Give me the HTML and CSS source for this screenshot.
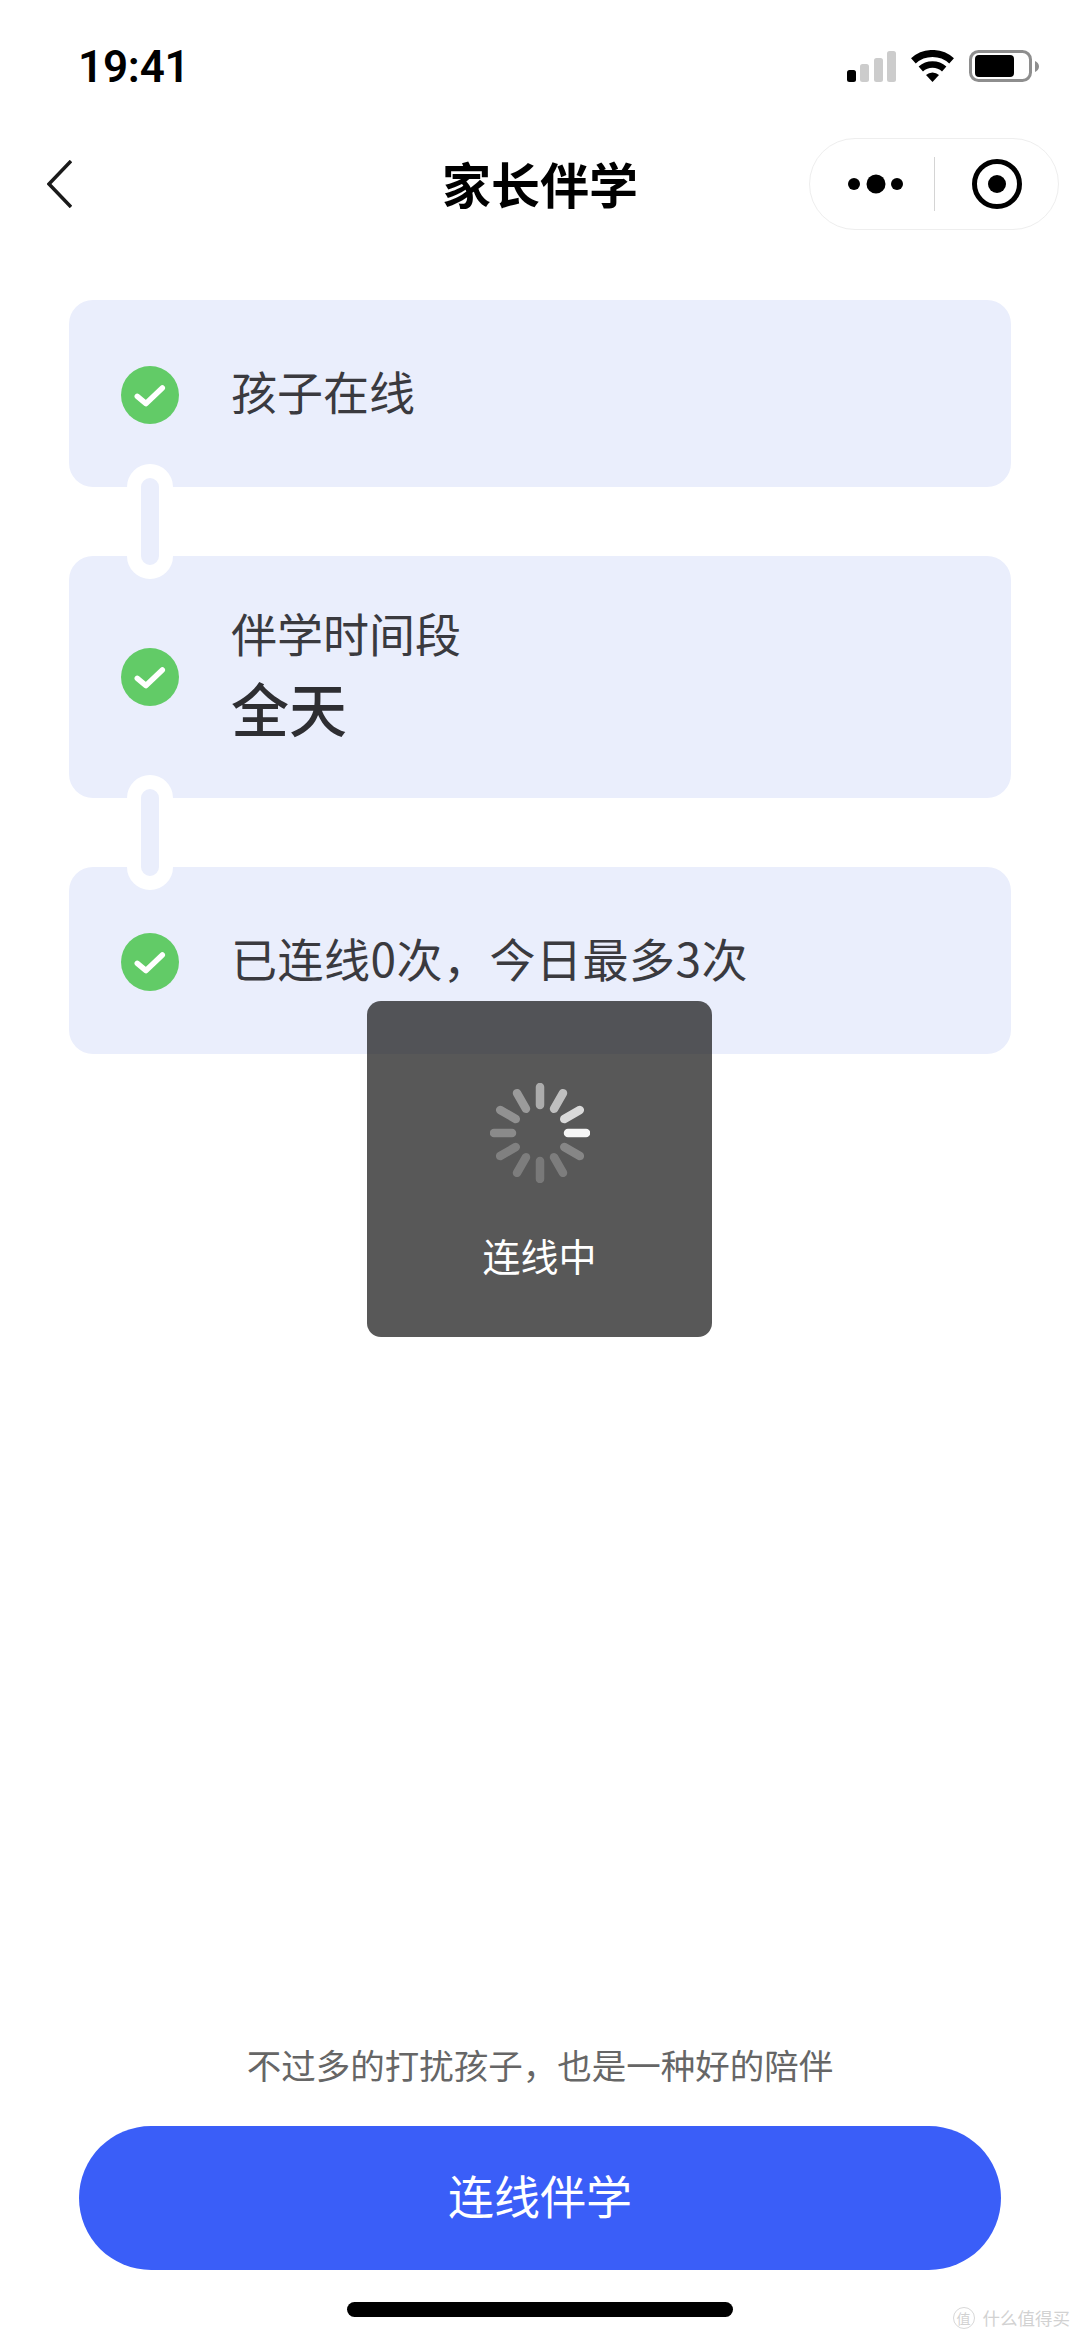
FILE: index.html
```html
<!DOCTYPE html>
<html lang="zh-CN">
<head>
    <meta charset="UTF-8">
    <meta name="viewport" content="width=device-width, initial-scale=1.0">
    <title>家长伴学</title>
    <link rel="stylesheet" href="styles.css">
</head>
<body>
    <div class="phone">
        <div class="status-bar">
            <span class="time">19:41</span>
            <div class="status-icons">
                <svg width="49" height="32" viewBox="0 0 49 32">
                    <rect x="0" y="20" width="9" height="12" rx="2.5" fill="#000"/>
                    <rect x="13" y="14" width="9" height="18" rx="2.5" fill="#ccc"/>
                    <rect x="27" y="8" width="9" height="24" rx="2.5" fill="#ccc"/>
                    <rect x="40" y="1" width="9" height="31" rx="2.5" fill="#ccc"/>
                </svg>
                <svg width="43" height="32" viewBox="0 0 43 32">
                    <path d="M2.4 10.8A28.5 28.5 0 0 1 40.6 10.8" fill="none" stroke="#000" stroke-width="7"/>
                    <path d="M9.8 19A17.5 17.5 0 0 1 33.2 19" fill="none" stroke="#000" stroke-width="6.5"/>
                    <path d="M21.5 32L15 25A9.5 9.5 0 0 1 28 25Z" fill="#000"/>
                </svg>
                <svg width="70" height="32" viewBox="0 0 70 32">
                    <rect x="1.5" y="1.5" width="60" height="29" rx="8" fill="none" stroke="#8e8e8e" stroke-width="3"/>
                    <rect x="6" y="5" width="39" height="22" rx="4" fill="#000"/>
                    <path d="M66 11C68.500 12 70 14 70 16.500C70 19 68.500 21 66 22Z" fill="#8e8e8e"/>
                </svg>
            </div>
        </div>

        <div class="nav-bar">
            <svg class="back" width="25" height="48" viewBox="0 0 25 48">
                <path d="M24 1L2 24L24 47" fill="none" stroke="#1a1a1a" stroke-width="3.500"/>
            </svg>
            <h1 class="nav-title">家长伴学</h1>
            <div class="capsule">
                <div class="capsule-part">
                    <svg class="capsule-dots" width="55" height="20" viewBox="0 0 55 20">
                        <circle cx="6" cy="10" r="6"/>
                        <circle cx="28" cy="10" r="9.500"/>
                        <circle cx="49" cy="10" r="6"/>
                    </svg>
                </div>
                <div class="capsule-part">
                    <svg class="capsule-ring" width="50" height="50" viewBox="0 0 50 50">
                        <circle cx="25" cy="25" r="22.500" fill="none" stroke="#000" stroke-width="5"/>
                        <circle cx="25" cy="25" r="9"/>
                    </svg>
                </div>
            </div>
        </div>

        <div class="steps">
            <div class="card">
                <svg class="check" width="58" height="58" viewBox="0 0 58 58">
                    <circle cx="29" cy="29" r="29" fill="#62cb67"/>
                    <path d="M16.300 30.300L25 37.600L41.300 22" fill="none" stroke="#fff" stroke-width="5.500" stroke-linecap="round" stroke-linejoin="round"/>
                </svg>
                <div class="card-text">孩子在线</div>
                <span class="link"></span>
            </div>
            <div class="card card-tall">
                <svg class="check" width="58" height="58" viewBox="0 0 58 58">
                    <circle cx="29" cy="29" r="29" fill="#62cb67"/>
                    <path d="M16.300 30.300L25 37.600L41.300 22" fill="none" stroke="#fff" stroke-width="5.500" stroke-linecap="round" stroke-linejoin="round"/>
                </svg>
                <div class="card-text">
                    伴学时间段
                    <div class="card-value">全天</div>
                </div>
                <span class="link"></span>
            </div>
            <div class="card">
                <svg class="check" width="58" height="58" viewBox="0 0 58 58">
                    <circle cx="29" cy="29" r="29" fill="#62cb67"/>
                    <path d="M16.300 30.300L25 37.600L41.300 22" fill="none" stroke="#fff" stroke-width="5.500" stroke-linecap="round" stroke-linejoin="round"/>
                </svg>
                <div class="card-text card-text-long">已连线0次，今日最多3次</div>
            </div>
        </div>

        <div class="footer">
            <p class="tip">不过多的打扰孩子，也是一种好的陪伴</p>
            <button class="main-btn">连线伴学</button>
            <div class="home-bar"></div>
        </div>

        <div class="toast">
            <svg class="spinner" width="100" height="100" viewBox="-50 -50 100 100">
                <g stroke="#fff" stroke-width="8.500" stroke-linecap="round">
                    <line x1="28" x2="46" opacity="0.95"/>
                    <line x1="28" x2="46" opacity="0.28" transform="rotate(30)"/>
                    <line x1="28" x2="46" opacity="0.22" transform="rotate(60)"/>
                    <line x1="28" x2="46" opacity="0.2" transform="rotate(90)"/>
                    <line x1="28" x2="46" opacity="0.22" transform="rotate(120)"/>
                    <line x1="28" x2="46" opacity="0.24" transform="rotate(150)"/>
                    <line x1="28" x2="46" opacity="0.3" transform="rotate(180)"/>
                    <line x1="28" x2="46" opacity="0.34" transform="rotate(210)"/>
                    <line x1="28" x2="46" opacity="0.4" transform="rotate(240)"/>
                    <line x1="28" x2="46" opacity="0.5" transform="rotate(270)"/>
                    <line x1="28" x2="46" opacity="0.62" transform="rotate(300)"/>
                    <line x1="28" x2="46" opacity="0.78" transform="rotate(330)"/>
                </g>
            </svg>
            <div class="toast-text">连线中</div>
        </div>

        <div class="watermark">
            <span class="watermark-logo">值</span>
            <span>什么值得买</span>
        </div>
    </div>
</body>
</html>
```

FILE: styles.css
```css
* { box-sizing: border-box; }
body {
    margin: 0;
    background: #fff;
    font-family: "Noto Sans CJK SC", "Noto Sans", sans-serif;
}
.phone {
    position: relative;
    display: flex;
    flex-direction: column;
    width: 1080px;
    height: 2339px;
    overflow: hidden;
}

/* status bar */
.status-bar {
    display: flex;
    justify-content: space-between;
    align-items: center;
    height: 132px;
    padding: 0 41px 0 78px;
}
.time {
    margin-top: 2px;
    font-family: Roboto, "Liberation Sans", sans-serif;
    font-size: 44px;
    font-weight: 600;
    letter-spacing: -0.2px;
    color: #000;
}
.status-icons { display: flex; align-items: center; gap: 15px; }
.status-icons svg { display: block; }

/* nav */
.nav-bar {
    display: grid;
    grid-template-columns: minmax(0, 1fr) auto minmax(0, 1fr);
    align-items: center;
    height: 104px;
    padding: 0 21px;
}
.back { display: block; margin-left: 26px; }
.nav-title {
    margin: 0 0 4px;
    font-size: 49px;
    font-weight: 700;
    color: #000;
    line-height: 1;
}
.capsule {
    justify-self: end;
    display: flex;
    align-items: center;
    width: 250px;
    height: 92px;
    border: 1.5px solid #eee;
    border-radius: 46px;
    background: #fff;
}
.capsule-part {
    flex: 1;
    display: flex;
    justify-content: center;
    align-items: center;
    height: 54px;
}
.capsule-part + .capsule-part { border-left: 1.5px solid #d4d4d4; }
.capsule-dots { margin-left: 8px; }
.capsule-ring { margin-left: 2px; }

/* step cards */
.steps {
    display: flex;
    flex-direction: column;
    gap: 69px;
    margin-top: 64px;
    padding: 0 69px;
}
.card {
    position: relative;
    display: flex;
    align-items: center;
    gap: 53px;
    height: 187px;
    padding-left: 52px;
    border-radius: 24px;
    background: #eaeefc;
}
.card-tall { height: 242px; }
.check { flex: none; display: block; margin-top: 3px; }
.card-tall .check { margin-top: 0; }
.card-text {
    margin: 0 0 8px -1px;
    font-size: 46px;
    line-height: 64px;
    color: #3a3a3f;
}
.card-text-long { letter-spacing: 0.5px; }
.card-value {
    margin-top: 3px;
    font-size: 58px;
    font-weight: 500;
    line-height: 80px;
    color: #2e2e32;
}
.link {
    position: absolute;
    left: 58px;
    bottom: -92px;
    width: 46px;
    height: 115px;
    border: 14px solid #fff;
    border-radius: 23px;
    background: #eaeefc;
    z-index: 1;
}

/* bottom */
.footer {
    margin-top: auto;
    display: flex;
    flex-direction: column;
    align-items: center;
    padding: 0 79px 22px;
}
.tip {
    margin: 0 0 37px;
    font-size: 34.500px;
    line-height: 50px;
    color: #666;
}
.main-btn {
    width: 100%;
    height: 144px;
    padding-bottom: 10px;
    border: none;
    border-radius: 72px;
    background: #3a5ef8;
    color: #fff;
    font-family: inherit;
    font-size: 46px;
}
.home-bar {
    width: 386px;
    height: 15px;
    margin-top: 32px;
    border-radius: 8px;
    background: #000;
}

/* loading toast */
.toast {
    position: absolute;
    left: 367px;
    top: 1001px;
    display: flex;
    flex-direction: column;
    align-items: center;
    width: 345px;
    height: 336px;
    padding-top: 82px;
    border-radius: 14px;
    background: rgba(17, 17, 17, 0.7);
    z-index: 2;
}
.spinner { display: block; }
.toast-text {
    margin-top: 47px;
    font-size: 38px;
    line-height: 50px;
    color: #fff;
}

.watermark {
    position: absolute;
    right: 10px;
    bottom: 10px;
    display: flex;
    align-items: center;
    gap: 8px;
    font-size: 17.500px;
    line-height: 22px;
    color: #d2d2d2;
}
.watermark-logo {
    display: flex;
    justify-content: center;
    align-items: center;
    width: 22px;
    height: 22px;
    border: 1px solid #d8d8d8;
    border-radius: 50%;
    font-size: 14px;
}
```
